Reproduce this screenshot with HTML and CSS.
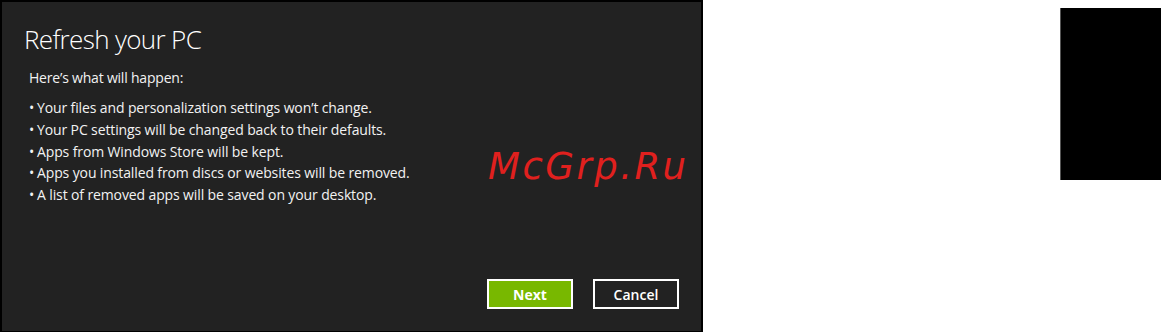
FILE: index.html
```html
<!DOCTYPE html>
<html>
<head>
<meta charset="utf-8">
<link rel="stylesheet" href="styles.css">
</head>
<body>
<div class="page">
  <div class="dialog">
    <h1 class="title">Refresh your PC</h1>
    <p class="intro">Here’s what will happen:</p>
    <ul class="list">
      <li>Your files and personalization settings won’t change.</li>
      <li>Your PC settings will be changed back to their defaults.</li>
      <li>Apps from Windows Store will be kept.</li>
      <li>Apps you installed from discs or websites will be removed.</li>
      <li>A list of removed apps will be saved on your desktop.</li>
    </ul>
    <div class="actions">
      <button class="btn btn-primary">Next</button>
      <button class="btn">Cancel</button>
    </div>
    <div class="watermark">McGrp.Ru</div>
  </div>
  <div class="side-block"></div>
</div>
</body>
</html>
```
FILE: styles.css
```css
* { box-sizing: border-box; }
html, body { margin: 0; padding: 0; background: #fff; }
.page {
  display: flex;
  width: 1161px;
  height: 332px;
}
.dialog {
  position: relative;
  width: 703px;
  height: 332px;
  background: #222222;
  border: 2px solid #000;
  border-bottom-width: 1px;
  padding: 19px 22px 22px 22px;
  display: flex;
  flex-direction: column;
  font-family: "Open Sans", "Noto Sans", sans-serif;
  color: #fff;
}
.title {
  margin: 0;
  font-size: 26px;
  font-weight: 300;
  line-height: 36px;
  letter-spacing: -0.65px;
}
.intro {
  margin: 11px 0 0 5px;
  font-size: 14px;
  line-height: 20px;
  letter-spacing: -0.2px;
  color: #f2f2f2;
}
.list {
  list-style: none;
  margin: 9px 0 0 5px;
  padding: 0;
  font-size: 14px;
  line-height: 21.75px;
  letter-spacing: -0.12px;
  color: #f2f2f2;
}
.list li::before {
  content: "•";
  display: inline-block;
  width: 8px;
}
.actions {
  margin-top: auto;
  display: flex;
  justify-content: flex-end;
  gap: 20px;
}
.btn {
  width: 86px;
  height: 30px;
  border: 2px solid #fff;
  background: #222222;
  color: #fff;
  font-family: "Open Sans", "Noto Sans", sans-serif;
  font-size: 14px;
  font-weight: 600;
  padding: 0;
}
.btn-primary {
  background: #78b800;
  font-weight: 700;
}
.watermark {
  position: absolute;
  left: 486px;
  top: 143px;
  font-family: "DejaVu Sans", sans-serif;
  font-style: oblique;
  font-size: 37px;
  color: #e0201e;
  letter-spacing: 2.5px;
}
.side-block {
  margin-left: auto;
  margin-top: 8px;
  width: 101px;
  height: 172px;
  background: #000;
  border-left: 1px solid #555;
}
```
